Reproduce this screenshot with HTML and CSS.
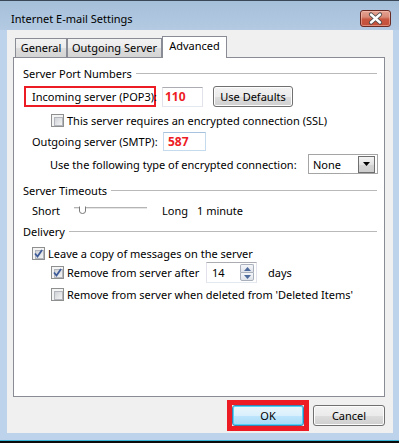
FILE: index.html
```html
<!DOCTYPE html>
<html>
<head>
<meta charset="utf-8">
<link rel="stylesheet" href="styles.css">
</head>
<body>
<div class="window">
  <div class="titlebar">
    <span class="title">Internet E-mail Settings</span>
    <div class="close-btn">
      <svg width="29" height="15" viewBox="0 0 29 15"><path d="M10,3.5 L19,11.5 M19,3.5 L10,11.5" stroke="#4a4a4a" stroke-width="4.2" stroke-linecap="round"/><path d="M10,3.5 L19,11.5 M19,3.5 L10,11.5" stroke="#ffffff" stroke-width="2.4" stroke-linecap="round"/></svg>
    </div>
  </div>
  <div class="frame">
    <div class="client">
      <div class="tabs">
        <div class="tab t-general">General</div>
        <div class="tab t-outgoing">Outgoing Server</div>
        <div class="tab t-advanced active">Advanced</div>
      </div>
      <div class="panel">
        <div class="group-head"><span class="gl">Server Port Numbers</span><i class="rule"></i></div>

        <div class="row r-incoming">
          <div class="hl-label">Incoming server (POP3):</div>
          <div class="textbox port p-in">110</div>
          <div class="btn b-defaults">Use Defaults</div>
        </div>

        <div class="row r-ssl">
          <span class="cb"></span>
          <span class="cb-label">This server requires an encrypted connection (SSL)</span>
        </div>

        <div class="row r-outgoing">
          <span class="lbl-out">Outgoing server (SMTP):</span>
          <div class="textbox port p-out">587</div>
        </div>

        <div class="row r-enc">
          <span>Use the following type of encrypted connection:</span>
          <div class="select">
            <span class="sel-val">None</span>
            <span class="sel-btn"><svg width="7" height="4" viewBox="0 0 7 4"><path d="M0,0 H7 L3.5,4 Z" fill="#000"/></svg></span>
          </div>
        </div>

        <div class="group-head g-timeouts"><span class="gl">Server Timeouts</span><i class="rule"></i></div>

        <div class="row r-slider">
          <span class="lbl-short">Short</span>
          <svg class="slider" width="73" height="16" viewBox="0 0 73 16">
            <line x1="0" y1="5.5" x2="73" y2="5.5" stroke="#b4b4b4"/>
            <line x1="0" y1="6.5" x2="73" y2="6.5" stroke="#e6e6e6"/>
            <path d="M5.5,4.5 V9 Q5.5,11.5 8.5,11.5 Q11.5,11.5 11.5,9 V4.5" fill="#ffffff" stroke="#7a7a7a"/>
          </svg>
          <span class="lbl-long">Long</span>
          <span>1 minute</span>
        </div>

        <div class="group-head g-delivery"><span class="gl">Delivery</span><i class="rule"></i></div>

        <div class="row r-leave">
          <span class="cb checked"><svg width="9" height="9" viewBox="0 0 9 9"><path d="M1,4.5 L3.5,7.5 L8,1" fill="none" stroke="#3d5a99" stroke-width="1.8"/></svg></span>
          <span class="cb-label">Leave a copy of messages on the server</span>
        </div>

        <div class="row r-after">
          <span class="cb checked"><svg width="9" height="9" viewBox="0 0 9 9"><path d="M1,4.5 L3.5,7.5 L8,1" fill="none" stroke="#3d5a99" stroke-width="1.8"/></svg></span>
          <span class="cb-label lbl-after">Remove from server after</span>
          <div class="textbox spin">
            <span class="spin-val">14</span>
            <span class="spin-btns">
              <span class="sp sp-up"><svg width="7" height="4" viewBox="0 0 7 4"><path d="M0,4 H7 L3.5,0 Z" fill="#4e6b9c"/></svg></span>
              <span class="sp sp-down"><svg width="7" height="4" viewBox="0 0 7 4"><path d="M0,0 H7 L3.5,4 Z" fill="#4e6b9c"/></svg></span>
            </span>
          </div>
          <span class="lbl-days">days</span>
        </div>

        <div class="row r-deleted">
          <span class="cb"></span>
          <span class="cb-label">Remove from server when deleted from 'Deleted Items'</span>
        </div>
      </div>
      <div class="actions">
        <div class="hl-ok"><div class="btn b-ok">OK</div></div>
        <div class="btn b-cancel">Cancel</div>
      </div>
    </div>
  </div>
  <div class="bottom-edge"></div>
</div>
</body>
</html>
```

FILE: styles.css
```css
html, body {
  margin: 0;
  padding: 0;
}
body {
  width: 399px;
  height: 443px;
  overflow: hidden;
  font-family: "Noto Sans", "Open Sans", sans-serif;
  font-size: 11px;
  color: #000;
  background: #bcd3eb;
}
.window {
  display: flex;
  flex-direction: column;
  width: 399px;
  height: 443px;
}
.titlebar {
  height: 30px;
  box-sizing: border-box;
  border-top: 1px solid #3a4756;
  background: linear-gradient(to bottom, #a6bfd9, #b3cae2);
  display: flex;
  align-items: flex-start;
  justify-content: space-between;
  padding: 0 8px 0 11px;
}
.title {
  margin-top: 10px;
  line-height: 16px;
  font-size: 11px;
}
.close-btn {
  margin-top: 9px;
  width: 31px;
  height: 17px;
  box-sizing: border-box;
  border: 1px solid #6a2b24;
  border-radius: 3px;
  background: linear-gradient(to bottom, #e4a292 0%, #d98a78 40%, #c85640 55%, #c4503a 100%);
  box-shadow: inset 0 0 0 1px rgba(255, 210, 200, 0.45);
  display: flex;
  align-items: center;
  justify-content: center;
}
.close-btn svg {
  display: block;
}
.frame {
  display: flex;
  height: 403px;
  padding: 0 6px 0 7px;
}
.client {
  flex: 1;
  background: #f0f0f0;
  display: flex;
  flex-direction: column;
}
.tabs {
  display: flex;
  align-items: flex-end;
  height: 21px;
  margin-top: 6px;
  padding-left: 8px;
}
.tab {
  box-sizing: border-box;
  height: 19px;
  border: 1px solid #898c95;
  border-bottom: none;
  background: linear-gradient(to bottom, #f2f2f2 0%, #ebebeb 50%, #dddddd 51%, #d4d4d4 100%);
  text-align: center;
  line-height: 17px;
  position: relative;
}
.t-general {
  width: 52px;
}
.t-outgoing {
  width: 95px;
}
.t-advanced {
  width: 65px;
}
.tab.active {
  height: 22px;
  margin-bottom: -1px;
  background: #ffffff;
  z-index: 1;
  line-height: 18px;
}
.panel {
  box-sizing: border-box;
  width: 372px;
  height: 340px;
  margin-left: 6px;
  border: 1px solid #898c95;
  background: #ffffff;
  display: flex;
  flex-direction: column;
}
.group-head {
  display: flex;
  align-items: center;
  height: 16px;
  padding: 0 7px 0 9px;
  margin-top: 7px;
}
.gl {
  padding-right: 4px;
}
.rule {
  flex: 1;
  height: 0;
  border-top: 1px solid #b9b9b9;
}
.row {
  display: flex;
  align-items: center;
  white-space: nowrap;
}
.r-incoming {
  height: 21px;
  margin-top: 5px;
  padding-left: 10px;
}
.hl-label {
  box-sizing: border-box;
  width: 132px;
  height: 21px;
  border: 2px solid #ed1c24;
  padding-left: 6px;
  display: flex;
  align-items: center;
}
.textbox {
  box-sizing: border-box;
  border: 1px solid;
  border-color: #abadb3 #e2e3ea #e3e9ef #e2e3ea;
  background: #ffffff;
  display: flex;
  align-items: center;
}
.port {
  color: #ed1c24;
  font-weight: bold;
  font-size: 12px;
}
.p-in {
  width: 41px;
  height: 20px;
  margin-left: 6px;
  padding-left: 2px;
}
.btn {
  box-sizing: border-box;
  border: 1px solid #707070;
  border-radius: 3px;
  background: linear-gradient(to bottom, #f2f2f2 0%, #ebebeb 50%, #dddddd 51%, #cfcfcf 100%);
  box-shadow: inset 0 0 0 1px #fcfcfc;
  display: flex;
  align-items: center;
  justify-content: center;
}
.b-defaults {
  width: 80px;
  height: 21px;
  margin-left: 10px;
}
.r-ssl {
  height: 13px;
  margin-top: 7px;
  padding-left: 37px;
}
.cb {
  box-sizing: border-box;
  width: 13px;
  height: 13px;
  border: 1px solid #8e8f8f;
  background: #f4f4f4;
  padding: 1px;
  display: flex;
  align-items: center;
  justify-content: center;
  flex-shrink: 0;
  position: relative;
}
.cb::before {
  content: "";
  position: absolute;
  left: 2px;
  top: 2px;
  width: 7px;
  height: 7px;
  border: 1px solid #b2b6bc;
  background: linear-gradient(135deg, #cfd2d6, #f4f4f4);
}
.cb svg {
  position: relative;
  z-index: 1;
  display: block;
}
.cb-label {
  margin-left: 3px;
}
.r-outgoing {
  height: 19px;
  margin-top: 5px;
  padding-left: 18px;
}
.lbl-out {
  width: 131px;
  flex-shrink: 0;
}
.p-out {
  width: 43px;
  height: 19px;
  padding-left: 4px;
  border-color: #a8c3dd #c5daed #c5daed #c5daed;
}
.r-enc {
  height: 20px;
  margin-top: 3px;
  padding-left: 36px;
  padding-right: 6px;
}
.select {
  box-sizing: border-box;
  margin-left: auto;
  width: 70px;
  height: 20px;
  border: 1px solid #a5a5a5;
  background: #ffffff;
  display: flex;
  align-items: center;
  padding-right: 2px;
}
.sel-val {
  flex: 1;
  padding-left: 4px;
}
.sel-btn {
  box-sizing: border-box;
  width: 17px;
  height: 17px;
  border: 1px solid #6f6f6f;
  background: linear-gradient(to bottom, #f3f3f3, #e2e2e2 50%, #d4d4d4 51%, #cdcdcd);
  display: flex;
  align-items: center;
  justify-content: center;
}
.sel-btn svg {
  display: block;
}
.g-timeouts {
  margin-top: 8px;
}
.r-slider {
  height: 16px;
  margin-top: 4px;
  padding-left: 18px;
}
.lbl-short {
  width: 42px;
  flex-shrink: 0;
}
.slider {
  display: block;
  flex-shrink: 0;
}
.lbl-long {
  margin-left: 15px;
  width: 35px;
  flex-shrink: 0;
}
.g-delivery {
  margin-top: 5px;
}
.r-leave {
  height: 13px;
  margin-top: 8px;
  padding-left: 18px;
}
.r-after {
  height: 21px;
  margin-top: 2px;
  padding-left: 37px;
}
.lbl-after {
  width: 139px;
  flex-shrink: 0;
}
.spin {
  width: 51px;
  height: 21px;
  padding: 0 2px 0 5px;
}
.spin-val {
  flex: 1;
}
.spin-btns {
  display: flex;
  flex-direction: column;
  width: 14px;
  height: 17px;
}
.sp {
  flex: 1;
  box-sizing: border-box;
  border: 1px solid #a9b0bb;
  background: linear-gradient(to bottom, #f4f6f9, #dfe3ea);
  display: flex;
  align-items: center;
  justify-content: center;
}
.sp-up {
  border-bottom: none;
  border-radius: 2px 2px 0 0;
}
.sp-down {
  border-radius: 0 0 2px 2px;
}
.sp svg {
  display: block;
}
.lbl-days {
  margin-left: 11px;
}
.r-deleted {
  height: 13px;
  margin-top: 5px;
  padding-left: 37px;
}
.actions {
  display: flex;
  justify-content: flex-end;
  align-items: center;
  margin-top: 3px;
  padding-right: 8px;
}
.hl-ok {
  border: 5px solid #ed1c24;
}
.b-ok {
  width: 72px;
  height: 21px;
  border-color: #3c7fb1;
  box-shadow: inset 0 0 0 1px #4fd3f6;
  background: linear-gradient(to bottom, #eaf6fd 0%, #d9f0fc 50%, #bee6fd 51%, #a7d9f5 100%);
}
.b-cancel {
  width: 72px;
  height: 21px;
  margin-left: 4px;
}
.bottom-edge {
  height: 10px;
  background: linear-gradient(to bottom, #bcd3eb 0, #bcd3eb 7px, #3ab4d4 7px, #3ab4d4 8px, #0b0b0b 8px);
}
```
